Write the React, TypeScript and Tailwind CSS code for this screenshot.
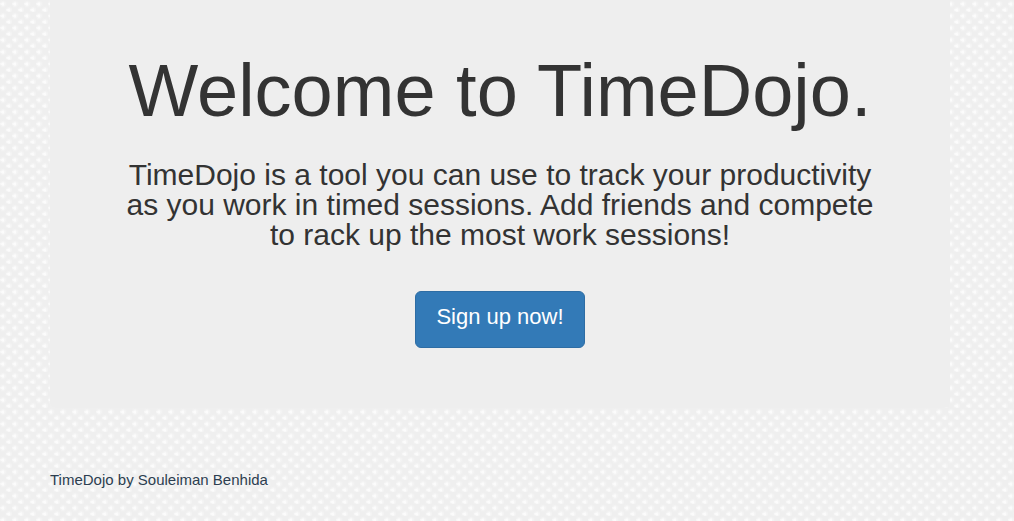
export default function App() {
  return (
    <div className="min-h-screen bg-[#efefef] bg-[radial-gradient(ellipse_3px_1px_at_2px_4px,#fff,transparent),radial-gradient(ellipse_1px_3px_at_3px_4px,#fff,transparent),radial-gradient(ellipse_3px_1px_at_8px_10px,#fff,transparent),radial-gradient(ellipse_1px_3px_at_9px_10px,#fff,transparent),radial-gradient(circle_at_3px_4px,#f8f8f8,transparent_4px),radial-gradient(circle_at_9px_10px,#f8f8f8,transparent_4px)] bg-[length:12px_12px] pr-16 pl-[50px] pb-7 font-['Liberation_Sans',Arial,sans-serif] text-[#333]">
      <div className="mx-auto max-w-[900px]">
        <main className="rounded-b-md bg-[#eee] px-[60px] pt-[51px] pb-[60px] text-center">
          <h1 className="text-[74px] leading-[80px]">Welcome to TimeDojo.</h1>
          <p className="mt-[29px] text-[30px] leading-[30px]">
            TimeDojo is a tool you can use to track your productivity as you work in timed sessions. Add friends and compete to rack up the most work sessions!
          </p>
          <a href="#signup" className="mt-[41px] inline-block rounded-md border border-[#2e6da4] bg-[#337ab7] px-5 pt-2.5 pb-[15px] text-[22px] leading-[30px] text-white">
            Sign up now!
          </a>
        </main>
        <footer className="mt-[60px] text-[15px] leading-6 text-[#2c3e50]">TimeDojo by Souleiman Benhida</footer>
      </div>
    </div>
  );
}
